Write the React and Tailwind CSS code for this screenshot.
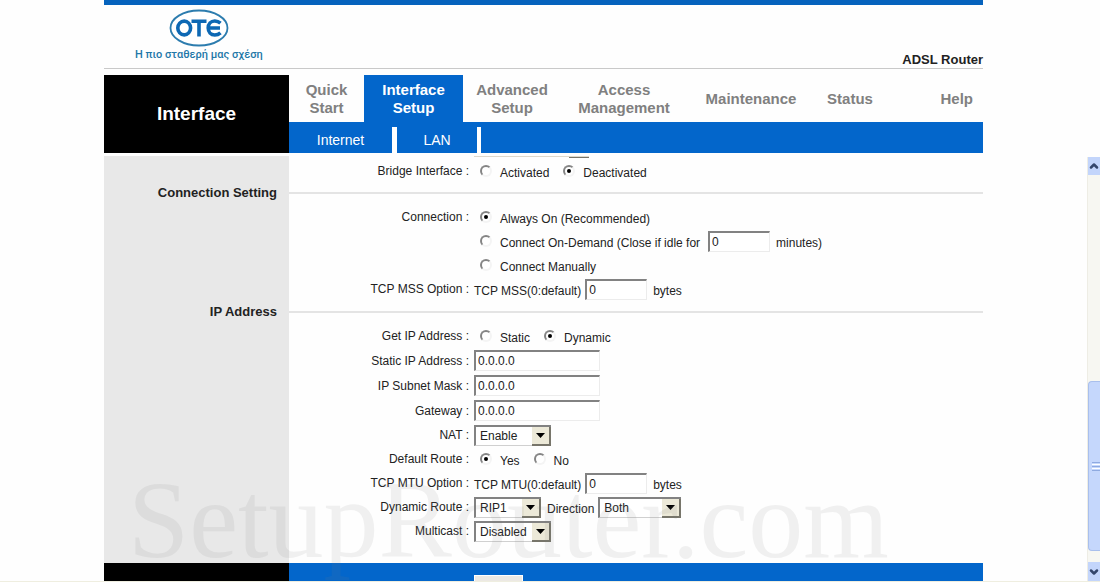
import { ChevronDown, ChevronUp } from 'lucide-react'

const tabs = [
  { label: 'Quick Start' },
  { label: 'Interface Setup', active: true },
  { label: 'Advanced Setup' },
  { label: 'Access Management' },
  { label: 'Maintenance' },
  { label: 'Status' },
]

function Logo() {
  return (
    <svg viewBox="0 0 60 38" className="h-[38px] w-[60px]" role="img" aria-label="OTE">
      <ellipse cx="30" cy="19" rx="28.5" ry="17.5" fill="#fff" stroke="#2c7cae" strokeWidth="1.8" />
      <g fill="none" stroke="#0d68b4" strokeWidth="3.6">
        <ellipse cx="15.2" cy="19" rx="6.4" ry="6.9" />
        <path d="M22.5 12.2H37.5M30 12.2V27.6" />
        <path d="M51.5 14.2C49.8 12.7 48 12 45.8 12c-4 0-6.6 2.9-6.6 7s2.6 7 6.6 7c2.2 0 4-.7 5.7-2.2M39.5 19H51" />
      </g>
    </svg>
  )
}

function Section({ title, children }) {
  return (
    <section className="grid grid-cols-[185px_1fr]">
      <div className="bg-[#e8e8e8] pr-3">
        {title && <h2 className="flex h-5 items-center justify-end text-[13px] font-bold">{title}</h2>}
      </div>
      <div>
        {title && (
          <div className="mb-0.5 flex h-5 items-center">
            <hr className="w-full border-t-2 border-[#e4e4e4]" />
          </div>
        )}
        {children}
      </div>
    </section>
  )
}

function Row({ label, htmlFor, tall, children }) {
  return (
    <div className={`grid grid-cols-[180px_1fr] items-center gap-[5px] ${tall ? 'h-[25px]' : 'h-6'}`}>
      <label htmlFor={htmlFor} className="text-right">{label && `${label} :`}</label>
      <div className="flex items-center gap-1 whitespace-nowrap">{children}</div>
    </div>
  )
}

function Radio({ name, label, checked }) {
  return (
    <label className="mr-1 flex items-center gap-2 pl-[6px]">
      <input
        type="radio"
        name={name}
        defaultChecked={checked}
        className="flex size-3 appearance-none items-center justify-center rounded-full border-2 border-t-[#858585] border-l-[#858585] border-r-[#f4f4f4] border-b-[#f4f4f4] bg-white checked:before:size-1 checked:before:rounded-full checked:before:bg-black"
      />
      <span className="pt-1">{label}</span>
    </label>
  )
}

function TextBox({ id, value, wide }) {
  return (
    <input
      id={id}
      type="text"
      defaultValue={value}
      aria-label={id}
      className={`h-[21px] border-t-2 border-l-2 border-r border-b border-t-[#828282] border-l-[#828282] border-r-[#ececec] border-b-[#ececec] bg-white pl-0.5 ${wide ? 'w-[126px]' : 'w-[62px]'}`}
    />
  )
}

function Select({ id, value, width }) {
  return (
    <div className={`relative ${width}`}>
      <select
        id={id}
        defaultValue={value}
        aria-label={id}
        className="block h-[21px] w-full appearance-none border-t-2 border-l-2 border-r border-b border-t-[#828282] border-l-[#828282] border-r-[#828282] border-b-[#d0d0d0] bg-white pl-1"
      >
        <option>{value}</option>
      </select>
      <span className="pointer-events-none absolute top-0.5 right-0 bottom-0 flex w-[19px] items-center justify-center border-r-2 border-b-2 border-[#77756a] bg-[#ece9d8]">
        <svg viewBox="0 0 9 5" className="h-[5px] w-[9px]"><path d="M0 0h9L4.5 5z" /></svg>
      </span>
    </div>
  )
}

function ScrollBar() {
  return (
    <div className="mt-1 flex w-[13px] shrink-0 flex-col overflow-hidden border-l border-[#eeede5] bg-[#f7f7f2]">
      <button aria-label="Scroll up" className="flex h-[18px] items-center justify-center bg-[#c3d5fb] text-[#34466b]">
        <ChevronUp size={14} strokeWidth={5} />
      </button>
      <div className="mt-[206px] flex h-[170px] flex-col items-end justify-center gap-px rounded-l-sm border border-r-0 border-[#a9bfec] bg-[#c5d7fc]">
        <span className="h-px w-2 bg-[#8faae0]" />
        <span className="h-px w-2 bg-white" />
        <span className="h-px w-2 bg-[#8faae0]" />
        <span className="h-px w-2 bg-white" />
        <span className="h-px w-2 bg-[#8faae0]" />
      </div>
      <button aria-label="Scroll down" className="mt-auto flex h-[19px] items-center justify-center bg-[#c3d5fb] text-[#34466b]">
        <ChevronDown size={14} strokeWidth={5} />
      </button>
    </div>
  )
}

export default function App() {
  return (
    <div className="bg-[#fefefe] font-['Liberation_Sans',Arial,sans-serif] text-[12px] leading-4 text-[#222]">
      <div className="pr-[13px]">
        <header className="mx-auto max-w-[879px]">
          <div className="h-[5px] bg-[#0663bd]" />
          <div className="flex h-16 items-end justify-between border-b border-[#c9c9c9]">
            <div className="ml-[31px] flex flex-col items-center self-start pt-1 text-[#2377a8]">
              <Logo />
              <p className="font-[Roboto,sans-serif] text-[11px] leading-4 font-medium">Η πιο σταθερή μας σχέση</p>
            </div>
            <p className="text-[13px] font-bold">ADSL Router</p>
          </div>

          <div className="mt-[6px] grid grid-cols-[185px_1fr]">
            <h1 className="flex items-center justify-center bg-black text-[19px] font-bold text-white">Interface</h1>
            <div>
              <nav className="grid h-[47px] grid-cols-[75px_99px_98px_126px_128px_70px_1fr] text-[15px] leading-[18px] font-bold text-[#808080]">
                {tabs.map((tab) => (
                  <a
                    key={tab.label}
                    href="#"
                    className={`flex items-center justify-center px-2 text-center ${tab.active ? 'bg-[#0366cb] text-white' : ''}`}
                  >
                    {tab.label}
                  </a>
                ))}
                <a href="#" className="flex items-center justify-end pr-[10px]">Help</a>
              </nav>
              <nav className="flex h-[31px] items-end bg-[#0366cb] text-[14px] text-white">
                <a href="#" className="flex h-[26px] w-[108px] items-center justify-center border-r-[5px] border-white">Internet</a>
                <a href="#" className="flex h-[26px] w-[84px] items-center justify-center border-r-4 border-white">LAN</a>
              </nav>
            </div>
          </div>
        </header>
      </div>

      <div className="flex border-b border-[#efeee0]">
        <div className="min-w-0 flex-1">
          <main className="relative mx-auto max-w-[879px] pt-[3px]">
            <Section>
              {/* bottom edge of the field scrolled under the header */}
              <div className="ml-[185px] flex h-[3px] w-[115px] items-start justify-end border-t border-[#ddd8cc]">
                <span className="h-px w-5 bg-[#77756a]" />
              </div>
              <Row label="Bridge Interface">
                <Radio name="bridge" label="Activated" />
                <Radio name="bridge" label="Deactivated" checked />
              </Row>
            </Section>

            <Section title="Connection Setting">
              <div className="pb-px">
                <Row label="Connection">
                  <Radio name="connection" label="Always On (Recommended)" checked />
                </Row>
                <Row>
                  <Radio name="connection" label="Connect On-Demand (Close if idle for" />
                  <TextBox id="idle" value="0" />
                  <span className="pt-1 pl-0.5">minutes)</span>
                </Row>
                <Row>
                  <Radio name="connection" label="Connect Manually" />
                </Row>
                <Row label="TCP MSS Option" htmlFor="mss">
                  <span className="pt-1">TCP MSS(0:default)</span>
                  <TextBox id="mss" value="0" />
                  <span className="pt-1 pl-0.5">bytes</span>
                </Row>
              </div>
            </Section>

            <Section title="IP Address">
              <div className="pb-5">
                <Row label="Get IP Address">
                  <Radio name="ip" label="Static" />
                  <Radio name="ip" label="Dynamic" checked />
                </Row>
                <Row label="Static IP Address" htmlFor="static" tall>
                  <TextBox id="static" value="0.0.0.0" wide />
                </Row>
                <Row label="IP Subnet Mask" htmlFor="mask" tall>
                  <TextBox id="mask" value="0.0.0.0" wide />
                </Row>
                <Row label="Gateway" htmlFor="gateway" tall>
                  <TextBox id="gateway" value="0.0.0.0" wide />
                </Row>
                <Row label="NAT" htmlFor="nat">
                  <Select id="nat" value="Enable" width="w-[77px]" />
                </Row>
                <Row label="Default Route">
                  <Radio name="route" label="Yes" checked />
                  <Radio name="route" label="No" />
                </Row>
                <Row label="TCP MTU Option" htmlFor="mtu">
                  <span className="pt-1">TCP MTU(0:default)</span>
                  <TextBox id="mtu" value="0" />
                  <span className="pt-1 pl-0.5">bytes</span>
                </Row>
                <Row label="Dynamic Route" htmlFor="rip">
                  <Select id="rip" value="RIP1" width="w-[67px]" />
                  <label htmlFor="direction" className="pt-1 pl-0.5">Direction</label>
                  <Select id="direction" value="Both" width="w-[83px]" />
                </Row>
                <Row label="Multicast" htmlFor="multicast">
                  <Select id="multicast" value="Disabled" width="w-[77px]" />
                </Row>
              </div>
            </Section>

            <footer className="grid h-[18px] grid-cols-[185px_1fr] overflow-hidden">
              <div className="bg-black" />
              <div className="bg-[#0366cb] pt-3">
                <button aria-label="Save" className="ml-[185px] block h-5 w-[49px] border border-white bg-[#ece9e4]" />
              </div>
            </footer>

            {/* watermark over the form */}
            <div className="pointer-events-none absolute inset-x-0 bottom-0 h-[120px] overflow-hidden pl-6 font-['Liberation_Serif',serif] text-[110px] leading-[118px] text-[#808080]/11">
              SetupRouter.com
            </div>
          </main>
        </div>
        <ScrollBar />
      </div>
    </div>
  )
}
